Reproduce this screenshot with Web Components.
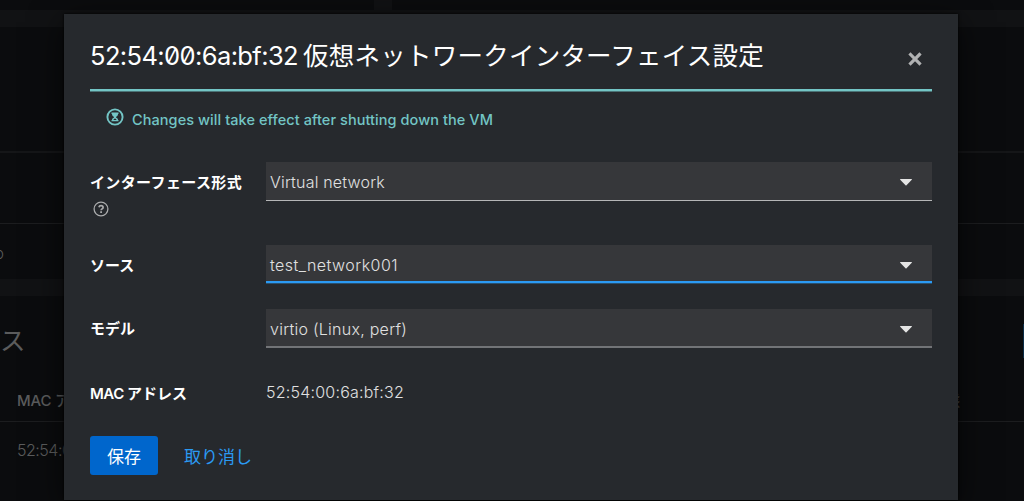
<!DOCTYPE html>
<html lang="ja">
<head>
<meta charset="utf-8">
<title>仮想ネットワークインターフェイス設定</title>
<style>
html,body{margin:0;height:501px;overflow:hidden;background:#0b0c0e}
body{font-family:Inter,"Noto Sans CJK JP",sans-serif;color:#fff}
</style>
</head>
<body>
<vm-page></vm-page>
<script>
const define=(name,html,setup)=>customElements.define(name,class extends HTMLElement{
  connectedCallback(){
    if(this.shadowRoot)return;
    const t=document.createElement('template');t.innerHTML=html;
    this.attachShadow({mode:'open'}).append(t.content.cloneNode(true));
    if(setup)setup(this);
  }
});

// Text run whose tracking is adjusted so that it takes the width given in "w"
define('fit-text','<style>:host{display:inline-block;white-space:pre}span{display:inline-block}</style><span><slot></slot></span>',el=>{
  const s=el.shadowRoot.querySelector('span'),w=+el.getAttribute('w');
  const n=[...el.textContent].length;
  s.style.letterSpacing=(w-s.getBoundingClientRect().width)/n+'px';
});

define('vm-backdrop',`<style>
:host{display:flex;flex-direction:column;height:501px;overflow:hidden;background:#0b0c0e;color:#5b5c5d;font-size:15px}
div{box-sizing:border-box;flex:none}
.top{height:10px;padding-left:374px}.top i{display:block;width:18px;height:10px;background:#111214}
.band{height:17px;background:#111214}
.a{height:126px;border-bottom:2px solid #151618}
.b{height:71px;border-bottom:1px solid #1c1d1f}
.c{height:55px;padding-top:20px;line-height:20px}
.c span{display:block;width:4px;direction:rtl;overflow:hidden;white-space:nowrap;font-weight:300}
.h{height:85px;display:flex;justify-content:space-between;padding-top:28px;font-size:25.5px;line-height:34px}
.h b{width:1px;background:#0a2b45;height:34px}
.t{height:41px;display:flex;justify-content:space-between;border-bottom:1px solid #1c1d1f;padding:10px 64px 0 17px;font-weight:500;line-height:20px}
.r{padding:17px 17px;font-size:16px;line-height:22px;font-weight:300}
</style>
<div class="top"><i></i></div><div class="band"></div>
<div class="a"></div><div class="b"></div><div class="c"><span>no</span></div>
<div class="band"></div>
<div class="h"><span>ス</span><b></b></div>
<div class="t"><span><fit-text w="38">MAC </fit-text>アドレス</span><span>状態</span></div>
<div class="r"><fit-text w="126">52:54:00:6a:bf:32</fit-text></div>`);

define('vm-hourglass',`<style>:host{display:block;width:18px;height:18px}svg{display:block}</style>
<svg width="18" height="18" viewBox="0 0 18 18"><circle cx="9" cy="9" r="7.6" fill="none" stroke="#73c5c5" stroke-width="1.9"/><path d="M5.500 4.600h7v1.300h-.5c0 1.500-.8 2.300-2 2.900v.7c1.200.500 2 1.200 2 2.400h.5v1.300h-7v-1.300h.5c0-1.200.8-1.900 2-2.400v-.7c-1.200-.6-2-1.400-2-2.900h-.5z" fill="#73c5c5"/><path d="M7.400 12c.3-.8.9-1.200 1.600-1.500.7.300 1.300.7 1.600 1.500z" fill="#26292d"/></svg>`);

define('vm-help',`<style>:host{display:block;width:16px;height:16px}svg{display:block}</style>
<svg width="16" height="16" viewBox="0 0 16 16" fill="none" stroke="#aaabac"><circle cx="8" cy="8" r="6.900" stroke-width="1.300"/><path d="M5.900 6.300C6.200 5.200 7 4.700 8 4.700c1.200 0 2.100.7 2.100 1.700 0 1.500-2 1.500-2 2.900" stroke-width="1.700"/><path d="M8.100 10.300v1.800" stroke-width="1.800"/></svg>`);

define('vm-select',`<style>
:host{display:flex;box-sizing:border-box;align-items:center;justify-content:space-between;height:39px;padding:2px 20px 0 4px;background:#36373a;border-bottom:1px solid #b5b6b7;color:#e0e0e0;font-size:16px;font-weight:300;line-height:24px}
:host([state=focus]){height:38px;padding-top:4px;border-bottom:2px solid #2b9af3;box-shadow:0 1px #28506f}
:host([state=last]){border-bottom:2px solid #727477;padding-top:3px}
</style><slot></slot><svg width="12" height="7" viewBox="0 0 12 7"><path d="M.5 0h11c.5 0 .6.500.3.800L6.500 6.300q-.5.500-1 0L.2.800C-.1.500 0 0 .5 0" fill="#e4e4e4"/></svg>`);

define('vm-field',`<style>
:host{display:grid;grid-template-columns:176px 1fr}
.l{font-size:15px;font-weight:600;line-height:20px;padding-top:var(--label-top,11px)}
</style><div class="l"><slot name="label"></slot></div><slot></slot>`);

define('vm-button',`<style>
:host{display:flex;box-sizing:border-box;align-items:center;justify-content:center;height:39px;padding-top:2px;font-size:17px;line-height:24px;color:#2b9af3}
:host([primary]){width:68px;background:#06c;color:#fff;border-radius:3px}
</style><slot></slot>`);

define('vm-dialog',`<style>
:host{display:flex;flex-direction:column;box-sizing:border-box;width:893.500px;height:486px;background:#26292d;padding:0 25.500px 0 26px;box-shadow:0 8px 32px rgba(0,0,0,.6),0 0 3px #000}
header{display:flex;box-sizing:border-box;align-items:center;justify-content:space-between;height:77px;padding:9px 10px 0 0;border-bottom:2px solid #73c5c5;box-shadow:0 1px #4b7477}
h1{margin:0;font-size:25.500px;font-weight:400;line-height:36px;white-space:nowrap;display:flex;font-feature-settings:"zero"}
header svg{margin-top:5px}
.note{display:flex;gap:8px;height:71px;box-sizing:border-box;padding:17px 0 0 16px;color:#73c5c5;font-size:14.500px;font-weight:500;line-height:24px}
.one{height:83px}.two{height:64px}.three{height:65px}
.three,.four{--label-top:10px}
vm-help{margin:8px 0 0 3px}
.mac{padding-top:6px;line-height:24px;font-size:16px;font-weight:300;color:#e0e0e0}
footer{display:flex;gap:26px;margin-top:28px}
.four{height:34px}
</style>
<header><h1><fit-text w="208">52:54:00:6a:bf:32</fit-text><fit-text w="461" style="padding-left:5px">仮想ネットワークインターフェイス設定</fit-text></h1>
<svg width="14" height="14" viewBox="0 0 14 14"><path d="M2.600 2.600l8.800 8.800M11.400 2.600l-8.800 8.800" stroke="#b0b1b2" stroke-width="3.200" stroke-linecap="square"/></svg></header>
<div class="note"><vm-hourglass></vm-hourglass><fit-text w="361">Changes will take effect after shutting down the VM</fit-text></div>
<vm-field class="one"><div slot="label"><fit-text w="152">インターフェース形式</fit-text><vm-help></vm-help></div><vm-select><fit-text w="115">Virtual network</fit-text></vm-select></vm-field>
<vm-field class="two"><span slot="label">ソース</span><vm-select state="focus"><fit-text w="128">test_network001</fit-text></vm-select></vm-field>
<vm-field class="three"><span slot="label">モデル</span><vm-select state="last"><fit-text w="137">virtio (Linux, perf)</fit-text></vm-select></vm-field>
<vm-field class="four"><span slot="label"><fit-text w="37">MAC </fit-text>アドレス</span><div class="mac"><fit-text w="138">52:54:00:6a:bf:32</fit-text></div></vm-field>
<footer><vm-button primary>保存</vm-button><vm-button>取り消し</vm-button></footer>`);

define('vm-page',`<style>
:host{display:grid;width:1024px;height:501px;overflow:hidden}
vm-backdrop,main{grid-area:1/1}
main{display:flex;padding:14px 0 0 64px;z-index:1}
</style><vm-backdrop></vm-backdrop><main><vm-dialog></vm-dialog></main>`);
</script>
</body>
</html>
